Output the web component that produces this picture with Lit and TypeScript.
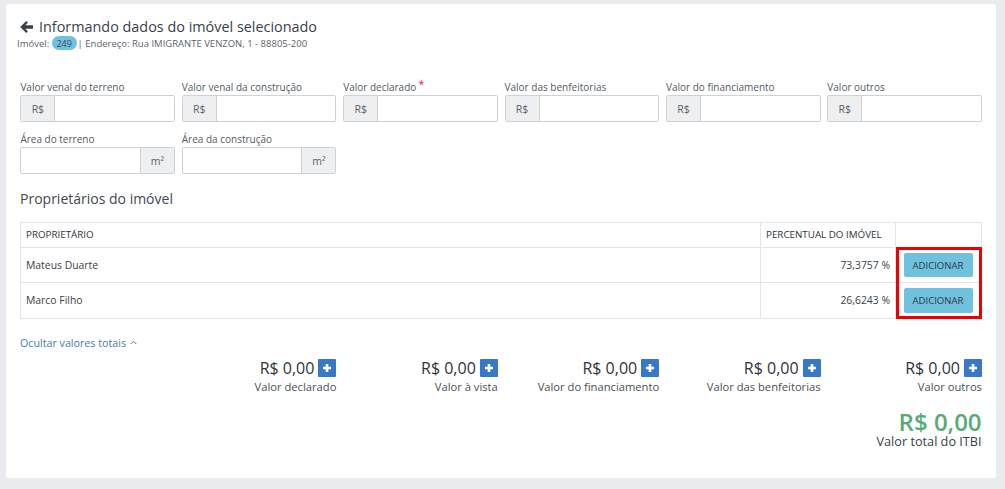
import { LitElement, html, css } from "lit";
import { customElement } from "lit/decorators.js";

const fields = [
  { label: "Valor venal do terreno" },
  { label: "Valor venal da construção" },
  { label: "Valor declarado", req: true },
  { label: "Valor das benfeitorias" },
  { label: "Valor do financiamento" },
  { label: "Valor outros" },
];
const totals = ["Valor declarado", "Valor à vista", "Valor do financiamento", "Valor das benfeitorias", "Valor outros"];
const owners = [
  ["Mateus Duarte", "73,3757 %"],
  ["Marco Filho", "26,6243 %"],
];

@customElement("app-root")
export class AppRoot extends LitElement {
  static styles = css`
    :host {
      display: block;
      width: 1005px;
      height: 489px;
      background: #e9ebef;
      font-family: "Open Sans", sans-serif;
      color: #3b4046;
      overflow: hidden;
    }
    * { box-sizing: border-box; }
    .card {
      margin: 4px 9px 0 6px;
      width: 990px;
      height: 474px;
      background: #fff;
      border-radius: 3px;
      padding: 13px 14px 0 14px;
    }
    .title {
      display: flex;
      align-items: center;
      gap: 6px;
      font-size: 14.4px;
      line-height: 20px;
      height: 20px;
      color: #3c4148;
    }
    .title svg { display: block; width: 13px; height: 12px; }
    .sub {
      margin: -1px 0 0 -3px;
      display: flex;
      align-items: center;
      font-size: 9.5px;
      height: 14px;
      color: #5d6470;
      white-space: pre;
    }
    .badge {
      display: inline-block;
      width: 25px;
      height: 14px;
      line-height: 16px;
      border-radius: 7px;
      background: #6fc1de;
      color: #3c4a55;
      text-align: center;
      margin: 0 1px 0 0;
      font-size: 9px;
    }
    .grid {
      display: grid;
      grid-template-columns: repeat(6, 154.6px);
      column-gap: 6.8px;
      row-gap: 10px;
      margin: 30px 0 0 0.4px;
    }
    .lab {
      display: block;
      font-size: 10px;
      line-height: 14px;
      height: 14px;
      color: #555b64;
      white-space: nowrap;
      margin-bottom: 1px;
    }
    .req { color: #e0245e; font-size: 11px; position: relative; top: -3px; margin-left: 2px; line-height: 0; }
    .group {
      display: flex;
      height: 27px;
      border: 1px solid #cfd1d5;
      border-radius: 2px;
      background: #fff;
    }
    .addon {
      width: 34px;
      background: #eeeff1;
      font-size: 10.5px;
      color: #5d626a;
      display: flex;
      align-items: center;
      justify-content: center;
      border-right: 1px solid #cfd1d5;
    }
    .addon.right { border-right: 0; border-left: 1px solid #cfd1d5; margin-left: auto; }
    h2 {
      font-weight: 400;
      font-size: 14px;
      line-height: 20px;
      margin: 15px 0 13px;
      color: #43484f;
    }
    .tablewrap { position: relative; width: 962px; }
    table {
      border-collapse: collapse;
      width: 961px;
      table-layout: fixed;
      font-size: 10.4px;
      color: #3c4148;
    }
    th, td { border: 1px solid #e3e4e8; padding: 0 5px; }
    th { height: 25px; font-weight: 400; text-align: left; font-size: 9.8px; padding-bottom: 2px; color: #2f343a; }
    td { height: 35.3px; }
    td.pct { text-align: right; }
    td.act { padding: 0 1px 0 0; text-align: center; }
    button {
      display: block;
      margin: 0 auto;
      width: 69px;
      height: 24.5px;
      border: 0;
      border-radius: 2px;
      background: #70c1de;
      color: #2f3a44;
      font: 400 9.6px "Open Sans", sans-serif;
      padding: 0;
    }
    .highlight {
      position: absolute;
      left: 876px;
      top: 25px;
      width: 86px;
      height: 72px;
      border: 3px solid #ee0000;
      pointer-events: none;
    }
    .toggle {
      margin-top: 16px;
      font-size: 10.7px;
      line-height: 16px;
      color: #4a78bb;
      display: flex;
      align-items: center;
      gap: 4px;
    }
    .toggle svg { width: 7px; height: 5px; display: block; }
    .totals {
      display: grid;
      grid-template-columns: repeat(5, 154.6px);
      column-gap: 6.8px;
      margin: 8px 0 0 161.8px;
      text-align: right;
    }
    .amt {
      display: flex;
      justify-content: flex-end;
      align-items: center;
      gap: 4px;
      height: 19px;
      font-size: 16px;
      color: #2f343a;
    }
    .plus {
      width: 18px;
      height: 18px;
      background: #3878c6;
      border-radius: 1px;
      display: flex;
      align-items: center;
      justify-content: center;
    }
    .plus svg { width: 10px; height: 10px; display: block; }
    .cap { font-size: 11.2px; line-height: 14px; margin-top: 2px; color: #4a4f57; }
    .grand { text-align: right; margin-top: 14px; width: 961.6px; }
    .gval { font-size: 24px; line-height: 28px; font-weight: 600; color: #57ab78; }
    .gcap { font-size: 12.7px; line-height: 13px; color: #3c4148; margin-top: -1px; }
  `;

  private addon(text: string, right = false) {
    return html`<div class="addon ${right ? "right" : ""}">${text}</div>`;
  }

  render() {
    return html`
      <div class="card">
        <div class="title">
          <svg viewBox="0 0 13 12"><path d="M6.2 0 7.9 1.7 5.3 4.3H13V7.7H5.3l2.6 2.6L6.2 12 .2 6z" fill="#3c4148"></path></svg>
          <span>Informando dados do imóvel selecionado</span>
        </div>
        <div class="sub">Imóvel: <span class="badge">249</span>| Endereço: Rua IMIGRANTE VENZON, 1 - 88805-200</div>
        <div class="grid">
          ${fields.map(
            (f) => html`<div>
              <label class="lab">${f.label}${f.req ? html`<span class="req">*</span>` : ""}</label>
              <div class="group">${this.addon("R$")}</div>
            </div>`
          )}
          ${["Área do terreno", "Área da construção"].map(
            (l) => html`<div>
              <label class="lab">${l}</label>
              <div class="group">${this.addon("m²", true)}</div>
            </div>`
          )}
        </div>
        <h2>Proprietários do imóvel</h2>
        <div class="tablewrap">
          <table>
            <colgroup><col style="width:740px" /><col style="width:135px" /><col style="width:86px" /></colgroup>
            <thead><tr><th>PROPRIETÁRIO</th><th>PERCENTUAL DO IMÓVEL</th><th></th></tr></thead>
            <tbody>
              ${owners.map(
                ([n, p]) => html`<tr>
                  <td>${n}</td>
                  <td class="pct">${p}</td>
                  <td class="act"><button>ADICIONAR</button></td>
                </tr>`
              )}
            </tbody>
          </table>
          <div class="highlight"></div>
        </div>
        <div class="toggle">
          <span>Ocultar valores totais</span>
          <svg viewBox="0 0 7 5"><path d="M.7 4 3.5 1.2 6.3 4" fill="none" stroke="#4a78bb"></path></svg>
        </div>
        <div class="totals">
          ${totals.map(
            (t) => html`<div>
              <div class="amt">
                <span>R$ 0,00</span>
                <span class="plus"><svg viewBox="0 0 10 10"><path d="M5 1v8M1 5h8" stroke="#fff" stroke-width="2.6"></path></svg></span>
              </div>
              <div class="cap">${t}</div>
            </div>`
          )}
        </div>
        <div class="grand">
          <div class="gval">R$ 0,00</div>
          <div class="gcap">Valor total do ITBI</div>
        </div>
      </div>
    `;
  }
}
